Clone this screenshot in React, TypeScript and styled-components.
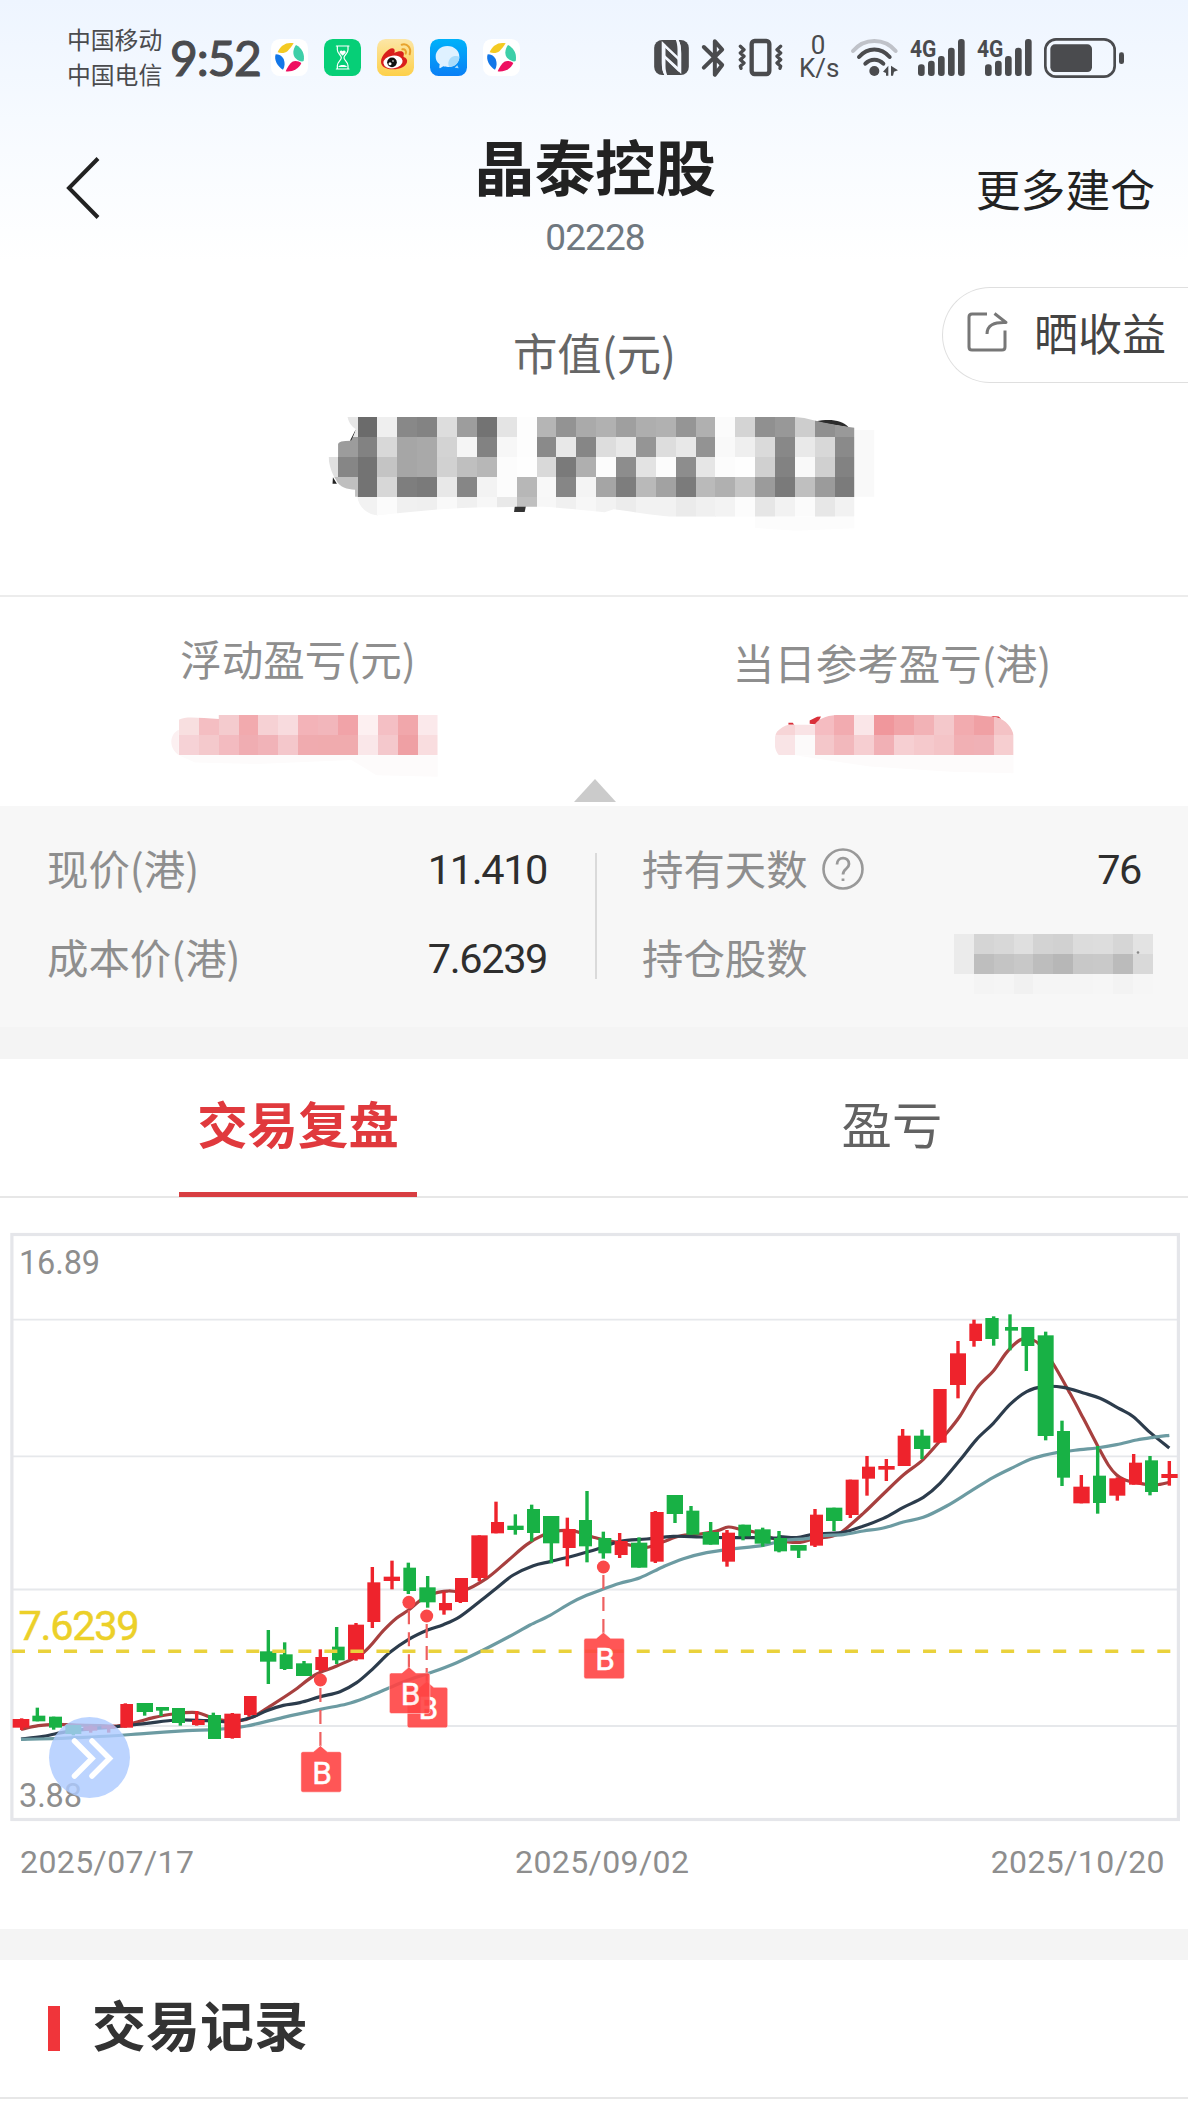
import React from "react";
import styled, { createGlobalStyle, css } from "styled-components";

const CJK = `"Noto Sans CJK SC", "Noto Sans", sans-serif`;
const NUM = `Roboto, "Noto Sans CJK SC", sans-serif`;

const GlobalStyle = createGlobalStyle`
  * { box-sizing: border-box; }
  body { margin: 0; background: #fff; font-family: ${CJK}; }
  svg { display: block; flex: none; overflow: visible; }
`;

const Page = styled.main`
  width: 1188px;
  height: 2127px;
  overflow: hidden;
  display: flex;
  flex-direction: column;
  background: linear-gradient(#eef5ff 0, #f6faff 120px, #fff 262px);
`;

/* ---------- status bar ---------- */

const StatusBar = styled.div`
  height: 114px;
  display: flex;
  align-items: flex-start;
  justify-content: space-between;
  padding: 22px 64px 0 67px;
  color: #4a4b4e;
`;

const StatusGroup = styled.div`
  display: flex;
  align-items: center;
  height: 71px;
`;

const Carriers = styled.div`
  font-size: 23.8px;
  line-height: 35px;
  width: 103px;
  margin-top: -3px;
  white-space: nowrap;
`;

const Clock = styled.div`
  font-family: Lato, ${NUM};
  font-weight: 400;
  -webkit-text-stroke: 1.1px #4a4b4e;
  font-size: 48px;
  line-height: 70px;
  letter-spacing: -1.2px;
  width: 101px;
  white-space: nowrap;
`;

const AppIcons = styled.div`
  display: flex;
  gap: 16px;
`;

const NetSpeed = styled.div`
  font-family: ${NUM};
  font-size: 26px;
  line-height: 22.5px;
  text-align: center;
  width: 38px;
  margin: -2px 14px 0 16px;
`;

const PinwheelIcon = () => (
  <svg width="37" height="37" viewBox="0 0 111 111">
    <rect width="111" height="111" rx="26" fill="#fff" />
    <path d="M20 40C28 18 48 8 68 13C62 22 56 30 50 36C42 43 30 44 20 40Z" fill="#f4ca22" />
    <path d="M75 18C94 28 102 46 98 66C92 70 80 64 72 56C64 46 66 30 75 18Z" fill="#3ecfa8" />
    <path d="M91 72C84 90 62 100 44 97C48 86 56 74 64 68C72 64 84 66 91 72Z" fill="#ee1060" />
    <path d="M14 46C8 62 20 84 36 92C42 84 42 70 38 60C32 50 24 46 14 46Z" fill="#1377e8" />
  </svg>
);

const HourglassIcon = () => (
  <svg width="37" height="37" viewBox="0 0 111 111">
    <rect width="111" height="111" rx="26" fill="#06cf77" />
    <g fill="none" stroke="#fff" strokeWidth="3.6" strokeLinecap="round" strokeLinejoin="round">
      <path d="M37 21H75M37 90H75M40 23V32C40 44 52 48 52 56C52 64 40 68 40 80V89M72 23V32C72 44 60 48 60 56C60 64 72 68 72 80V89" />
    </g>
    <path d="M56 50L47 41C46 33 54 33 56 37C58 33 66 33 65 41ZM43 84C46 76 66 76 69 84Z" fill="#fff" />
  </svg>
);

const WeiboIcon = () => (
  <svg width="37" height="37" viewBox="0 0 111 111">
    <defs>
      <linearGradient id="weibo" x1="0" y1="0" x2="0" y2="1">
        <stop offset="0" stopColor="#fce6a6" />
        <stop offset="1" stopColor="#fdd04a" />
      </linearGradient>
    </defs>
    <rect width="111" height="111" rx="26" fill="url(#weibo)" />
    <path d="M12 68C12 50 34 28 46 28C54 28 54 38 52 42C62 36 78 34 80 42C82 47 78 52 80 54C88 56 92 62 90 70C86 84 66 92 46 91C26 90 12 82 12 68Z" fill="#d91f1c" />
    <ellipse cx="48" cy="69" rx="29" ry="19" fill="#fff" transform="rotate(-8 48 69)" />
    <circle cx="45" cy="70" r="14.5" fill="#111" />
    <circle cx="39" cy="74" r="4.5" fill="#fff" />
    <circle cx="48" cy="66" r="2.5" fill="#fff" />
    <path d="M74 17C92 12 104 28 98 46M76 31C84 29 89 36 86 44" fill="none" stroke="#e8a32c" strokeWidth="6" strokeLinecap="round" />
  </svg>
);

const ChatIcon = () => (
  <svg width="37" height="37" viewBox="0 0 111 111">
    <defs>
      <linearGradient id="chat" x1="0" y1="0" x2="0" y2="1">
        <stop offset="0" stopColor="#00b2fa" />
        <stop offset="1" stopColor="#0a7ff5" />
      </linearGradient>
    </defs>
    <rect width="111" height="111" rx="26" fill="url(#chat)" />
    <path d="M52 21C74 21 88 36 88 53C88 72 72 84 54 84C48 84 44 83 40 82L30 88C27 88 28 84 29 76C21 70 17 62 17 53C17 35 32 21 52 21Z" fill="#dff1ff" />
    <path d="M88 54C88 72 74 84 58 84C50 72 58 54 74 51C80 50 85 51 88 54Z" fill="#a9dcfb" />
    <path d="M82 79L86 88L74 86Z" fill="#a9dcfb" />
  </svg>
);

const INK = "#4a4b4e";

const NfcIcon = () => (
  <svg width="35" height="35" viewBox="0 0 104 105">
    <rect width="104" height="105" rx="24" fill={INK} />
    <path d="M23 4L72 50V27C72 18 70 8 67 0H73C79 10 81 22 81 40V101L32 55V78C32 88 34 98 37 105H31C25 95 23 84 23 68Z" fill="#f3f7fe" />
    <path d="M27 12V70C27 84 29 94 33 103H56L77 103V98L32 55V40L71 76V58L32 22ZM38 3L71 33V27C71 18 69 8 66 1Z" fill={INK} />
    <path d="M32 30L72 66V82L32 46Z" fill={INK} />
    <path d="M23 4L34 14V78C34 88 36 98 39 105H31C25 95 23 84 23 68ZM81 101L70 91V27C70 18 68 8 65 0H73C79 10 81 22 81 40Z" fill="#f3f7fe" />
    <path d="M30 12L74 54V62L30 20ZM30 44L74 86V96L30 54Z" fill="#f3f7fe" />
  </svg>
);

const BluetoothIcon = () => (
  <svg width="23" height="38" viewBox="0 0 68 114">
    <path d="M5 24L60 78L38 107V7L60 32L5 86" fill="none" stroke={INK} strokeWidth="12" strokeLinejoin="round" strokeLinecap="round" />
  </svg>
);

const VibrateIcon = () => (
  <svg width="45" height="37" viewBox="0 0 135 111">
    <rect x="41" y="6" width="53" height="99" rx="9" fill="none" stroke={INK} strokeWidth="13" />
    <path
      d="M7 22L18 32L7 42L18 52L7 62L18 72L7 82L9 88M128 22L117 32L128 42L117 52L128 62L117 72L128 82L126 88"
      fill="none" stroke={INK} strokeWidth="10" strokeLinejoin="round" strokeLinecap="round"
    />
  </svg>
);

const WifiIcon = () => (
  <svg width="47" height="37" viewBox="0 0 141 111">
    <g fill="none" strokeWidth="12" strokeLinecap="round">
      <path d="M6 36C40 -4 100 -4 134 36" stroke="#bfc2c9" />
      <path d="M24 54C50 24 90 24 116 54" stroke={INK} />
      <path d="M43 74C58 58 82 58 97 74" stroke={INK} />
    </g>
    <circle cx="70" cy="96" r="15" fill={INK} />
    <path d="M112 80V110H105V102L96 98ZM120 80L141 94L129 98L126 110H120Z" fill={INK} />
  </svg>
);

const SignalIcon = () => (
  <svg width="55" height="37" viewBox="0 0 165 111">
    <text x="0" y="53" fontFamily="Roboto, sans-serif" fontWeight="700" fontSize="72" textLength="79" lengthAdjust="spacingAndGlyphs" fill={INK}>4G</text>
    {[76, 65, 51, 26, 0].map((top, i) => (
      <rect key={top} x={24 + i * 30} y={top} width="20" height={111 - top} rx="9" fill={INK} />
    ))}
  </svg>
);

const BatteryIcon = () => (
  <svg width="80" height="40" viewBox="0 0 240 120">
    <rect x="4" y="4" width="208" height="112" rx="32" fill="none" stroke={INK} strokeWidth="8" />
    <rect x="19" y="19" width="125" height="83" rx="14" fill={INK} />
    <rect x="225" y="43" width="15" height="35" rx="7" fill={INK} />
  </svg>
);

const Gap = styled.span<{ $w: number }>`
  width: ${(p) => p.$w}px;
  flex: none;
`;

/* ---------- header ---------- */

const Header = styled.header`
  height: 148px;
  display: grid;
  grid-template-columns: 1fr auto 1fr;
`;

const BackButton = styled.button`
  border: 0;
  background: none;
  padding: 0;
  margin-left: 66px;
  align-self: center;
  justify-self: start;
`;

const TitleBlock = styled.div`
  display: flex;
  flex-direction: column;
  align-items: center;
  padding: 21px 0 0 2px;
`;

const Title = styled.h1`
  margin: 0 0 23px;
  font-size: 60.5px;
  line-height: 60px;
  font-weight: 700;
  color: #222;
`;

const StockCode = styled.div`
  font: 400 37px/40px ${NUM};
  letter-spacing: -0.9px;
  color: #6f7880;
`;

const HeaderLink = styled.div`
  align-self: center;
  justify-self: end;
  margin: -1px 33px 0 0;
  font-size: 44.8px;
  line-height: 60px;
  color: #222;
`;

/* ---------- market value ---------- */

const Hero = styled.section`
  height: 335px;
  display: flex;
  flex-direction: column;
  border-bottom: 2px solid #ececec;
`;

const HeroTop = styled.div`
  height: 128px;
  display: grid;
  grid-template-columns: 1fr auto 1fr;
`;

const HeroLabel = styled.div`
  grid-column: 2;
  padding: 60px 0 0 1px;
  font-size: 44.4px;
  line-height: 60px;
  color: #666;
`;

const SharePill = styled.button`
  grid-column: 3;
  justify-self: end;
  margin: 25px 0 0;
  width: 246px;
  height: 96px;
  padding: 0 0 7px 24px;
  display: flex;
  align-items: center;
  gap: 27px;
  border: 1.5px solid #dfdfdf;
  border-right: 0;
  border-radius: 48px 0 0 48px;
  background: #fff;
  font: 400 44px/60px ${CJK};
  color: #444;
  white-space: nowrap;
`;

const HeroMosaic = styled.div`
  padding-left: 310px;
`;

type MosaicProps = {
  x: number; y: number; w: number; h: number; rows: string[][];
};

const Cells = ({ x, y, w, h, rows }: MosaicProps) => (
  <g shapeRendering="crispEdges">
    {rows.map((row, r) =>
      row.map((c, i) => (
        <rect key={`${r}-${i}`} x={x + i * w} y={y + r * h} width={w + 0.3} height={h + 0.3} fill={c} />
      ))
    )}
  </g>
);

const grey = (s: string) => s.split(" ").map((v) => `#${v}${v}${v}`);
const hex = (s: string) => s.split(" ").map((v) => `#${v}`);

const valueRows = [
  grey("e6 e6 6b ef 88 83 dd 9d 73 e4 fd b5 93 aa b1 9f ae b1 95 b0 fb d4 90 98 cd 90 99"),
  grey("e6 9c 82 d8 a6 a9 d3 f5 82 f7 fd 8a e8 86 dd e8 95 dd e8 93 f9 ef da 88 e9 d8 8a"),
  grey("e0 86 73 c4 a6 a9 d1 bf b7 fc fe d9 7a af fc 8d e3 fc 8d e6 fc fe d0 82 f9 d0 82"),
  grey("bf bf 73 d7 7e 7a e8 86 f3 fc b7 f8 86 f4 a5 7d b9 a2 7b ba b0 c5 9b 7a bf 9b 7b"),
  grey("f2 f2 f2 fb f0 ef f9 f0 f7 e9 bf f7 f0 f7 f2 ec f2 f2 eb f0 f3 fc e6 f2 fb e7 f2"),
];

const ValueMosaic = () => (
  <svg width="620" height="150" viewBox="0 0 1568 450" preserveAspectRatio="none">
    <clipPath id="valueClip">
      <path d="M95 81C98 100 108 112 117 118L104 152Q71 152 71 162V201H47C48 225 55 250 66 270C74 292 95 298 114 299V320H120C122 350 145 374 170 376C190 376 205 371 221 370C300 360 400 350 473 352L523 350H590C640 353 700 362 745 367L768 358C820 366 870 376 910 380H1377V113C1340 108 1290 96 1250 84L1227 81Z" />
    </clipPath>
    <path d="M1377 120H1427V320H1377Z" fill="#f9f9f9" />
    <path d="M1126 381H1377V415L1230 422L1126 414Z" fill="#fcfcfc" />
    <path d="M116 118L101 152H108ZM58 262L68 281H57Z" fill="#222" />
    <path d="M518 348H546L543 366H516Z" fill="#333" />
    <path d="M1280 94C1310 86 1346 88 1362 112L1300 100Z" fill="#2b2b2b" />
    <g clipPath="url(#valueClip)">
      <Cells x={19.8} y={81} w={50.28} h={60} rows={valueRows} />
    </g>
  </svg>
);

/* ---------- profit and loss ---------- */

const PnlRow = styled.section`
  height: 182px;
  display: grid;
  grid-template-columns: 594px 594px;
  background: #fff;
`;

const PnlCell = styled.div<{ $top: number; $gap: number }>`
  display: flex;
  flex-direction: column;
  align-items: center;
  padding-top: ${(p) => p.$top}px;
  gap: ${(p) => p.$gap}px;
  font-size: 41.5px;
  line-height: 60px;
  color: #8e8e8e;
`;

const PnlLabel = styled.div`
  margin-left: 2px;
`;

const PointerRow = styled.div`
  height: 27px;
  padding-left: 574px;
  background: #fff;
`;

const FloatMosaic = () => (
  <svg width="354" height="77" viewBox="0 250 566 230" preserveAspectRatio="none">
    <clipPath id="floatClip">
      <path d="M94 300C106 288 130 296 158 298V286H508V406H94Z" />
    </clipPath>
    <path d="M94 330C78 345 78 385 94 406Z" fill="#fcf0f1" />
    <path d="M94 406H508V470L410 466L370 420L220 432L120 428Z" fill="#fdfbfb" />
    <g clipPath="url(#floatClip)">
      <Cells x={94} y={286} w={31.85} h={60} rows={[
        hex("f8dfe0 f4bec2 f4cbce f2aaae f6d1d4 f8dbde f3b3b8 f2b6bb f1a3a8 fdf0f1 f4bfc4 f1a7ab fbe9eb"),
        hex("f6d2d6 f4c9cc f3bbc0 f0adb2 f1b3b8 f4c7cb f0abaf f0abae f0abae fae7e9 f4c8cc efa0a4 f9dddf"),
      ]} />
    </g>
  </svg>
);

const DayMosaic = () => (
  <svg width="354" height="77" viewBox="951 250 566 230" preserveAspectRatio="none">
    <clipPath id="dayClip">
      <path d="M1070 315H1112C1116 300 1130 288 1146 286H1360C1375 287 1390 290 1402 292C1418 300 1428 325 1430 346V406H1055C1046 390 1046 350 1052 335Q1060 320 1070 315Z" />
    </clipPath>
    <path d="M1104 312V302L1116 291L1122 290L1116 314ZM1070 309H1077L1079 315H1070ZM1394 289L1406 290L1410 297L1400 295Z" fill="#d9303a" />
    <path d="M1080 406H1430V460L1330 455L1200 440Z" fill="#fdfbfb" />
    <g clipPath="url(#dayClip)">
      <Cells x={1048} y={286} w={31.85} h={60} rows={[
        hex("f7d5d7 f9e3e5 f5bcc1 f2abb0 fae6e8 f0979c f1a4a8 f2b2b6 f4c8cb f2abaf f0a0a4 f4c2c5"),
        hex("f9e4e6 fcfafa f4c7ca f2b8bc f6ced1 f1b0b5 f6cfd2 f5c9cc f4c4c7 f1b0b4 f0b1b6 f6ced0"),
      ]} />
    </g>
  </svg>
);

/* ---------- position figures ---------- */

const Figures = styled.section`
  height: 221px;
  display: grid;
  grid-template-columns: 595px 2px 591px;
  background: #f7f7f7;
`;

const FigureColumn = styled.div<{ $left: number; $right: number }>`
  padding: 18px ${(p) => p.$right}px 0 ${(p) => p.$left}px;
`;

const FigureRule = styled.div`
  height: 126px;
  margin-top: 47px;
  background: #dadada;
`;

const FigureRow = styled.div`
  height: 89px;
  display: flex;
  align-items: center;
  justify-content: space-between;
  color: #8e8e8e;
  font-size: 41.4px;
  line-height: 60px;
`;

const FigureLabel = styled.div`
  display: flex;
  align-items: center;
  gap: 14px;
  margin-top: -4px;
`;

const FigureValue = styled.div`
  font-family: ${NUM};
  font-size: 41.5px;
  letter-spacing: -1.4px;
  margin-top: 3px;
  color: #2e2e2e;
`;

const SharesMosaic = styled.svg`
  margin: -1px -12px 0 0;
`;

const Band = styled.div<{ $h: number }>`
  height: ${(p) => p.$h}px;
  background: #f4f4f4;
`;

/* ---------- tabs ---------- */

const Tabs = styled.nav`
  height: 139px;
  display: grid;
  grid-template-columns: 1fr 1fr;
  background: #fff;
  border-bottom: 2px solid #e7e7e7;
`;

const Tab = styled.div<{ $active?: boolean }>`
  justify-self: center;
  margin-left: 2px;
  width: 238px;
  height: 138px;
  padding-top: 34px;
  text-align: center;
  font-size: 50.4px;
  line-height: 60px;
  color: #626262;
  ${(p) =>
    p.$active &&
    css`
      font-weight: 700;
      color: #e0393d;
      border-bottom: 5px solid #d83e42;
    `}
`;

/* ---------- chart ---------- */

const ChartSection = styled.section`
  height: 731px;
  background: #fff;
  position: relative;
`;

const FastForward = styled.button`
  position: absolute;
  left: 49px;
  top: 519px;
  width: 81px;
  height: 81px;
  padding: 0;
  border: 0;
  border-radius: 50%;
  background: rgba(173, 202, 255, 0.82);
`;

const DateAxis = styled.div`
  display: grid;
  grid-template-columns: 495px 1fr auto;
  padding: 0 23px 0 20px;
  height: 60px;
  font: 400 32px/60px ${NUM};
  letter-spacing: 0.4px;
  color: #8e8e8e;
`;

const DateLabel = styled.span`
  white-space: nowrap;
`;

const UP = "#ee232c";
const DOWN = "#18b145";

/* Each candle: direction, body left, body right, body top, body bottom, high, low, wick x */
type Candle = [number, number, number, number, number, number, number, number];
type Series = { ox: number; oy: number; candles: Candle[] };

const series: Series[] = [
  { ox: 0, oy: 1460, candles: [
    [1, 38, 88, 777, 803, 775, 810, 65], [0, 97, 136, 767, 784, 743, 784, 112],
    [0, 147, 186, 770, 803, 770, 809, 161], [0, 196, 244, 795, 822, 795, 826, 220],
    [1, 250, 292, 799, 812, 796, 818, 272], [1, 304, 346, 797, 806, 795, 818, 326],
    [1, 361, 399, 732, 803, 730, 803, 376], [0, 410, 459, 729, 756, 729, 767, 434],
    [0, 468, 507, 741, 752, 741, 768, 483], [0, 516, 555, 744, 789, 744, 797, 541],
    [1, 576, 614, 780, 795, 753, 797, 590], [0, 624, 663, 765, 837, 758, 837, 640],
    [1, 673, 722, 761, 834, 759, 836, 697], [1, 732, 770, 708, 765, 708, 770, 747],
    [0, 780, 829, 574, 605, 510, 672, 805], [0, 839, 878, 583, 627, 547, 630, 854],
    [0, 888, 936, 610, 648, 603, 648, 912], [1, 946, 984, 591, 630, 568, 634, 961],
    [0, 996, 1034, 560, 601, 501, 612, 1010], [1, 1044, 1092, 494, 598, 489, 602, 1068],
    [1, 1102, 1141, 367, 486, 321, 504, 1117], [1, 1151, 1200, 350, 363, 302, 388, 1176],
    [0, 1210, 1248, 323, 393, 308, 402, 1225],
  ] },
  { ox: 380, oy: 1440, candles: [
    [0, 118, 167, 442, 487, 408, 503, 143], [1, 177, 216, 489, 511, 455, 524, 192],
    [1, 225, 264, 414, 486, 414, 489, 241], [1, 274, 323, 286, 414, 286, 424, 298],
    [1, 333, 372, 246, 280, 185, 280, 348], [0, 382, 431, 257, 270, 223, 284, 406],
    [0, 441, 480, 207, 279, 194, 305, 455], [0, 489, 538, 228, 310, 228, 370, 514],
    [1, 548, 587, 267, 324, 233, 379, 562], [0, 597, 636, 240, 319, 153, 367, 621],
    [0, 655, 694, 294, 340, 275, 356, 670], [1, 704, 743, 303, 345, 279, 354, 719],
    [0, 753, 802, 308, 383, 292, 383, 777], [1, 811, 851, 216, 365, 213, 369, 826],
    [0, 860, 909, 165, 222, 165, 249, 885], [0, 919, 958, 212, 284, 198, 284, 933],
    [0, 968, 1017, 276, 314, 246, 314, 992], [1, 1026, 1065, 278, 365, 270, 380, 1041],
    [0, 1075, 1113, 254, 289, 254, 301, 1089], [0, 1124, 1172, 268, 311, 263, 320, 1148],
    [0, 1182, 1221, 294, 334, 273, 337, 1197], [0, 1231, 1280, 315, 332, 315, 354, 1256],
  ] },
  { ox: 780, oy: 1220, candles: [
    [1, 90, 129, 884, 977, 867, 981, 105], [0, 138, 187, 863, 903, 863, 933, 162],
    [1, 197, 236, 779, 885, 779, 894, 211], [1, 246, 285, 740, 776, 708, 827, 261],
    [1, 295, 344, 738, 749, 717, 783, 319], [1, 353, 392, 647, 738, 627, 738, 368],
    [0, 402, 451, 647, 687, 629, 717, 426], [1, 460, 500, 507, 668, 507, 668, 480],
    [1, 510, 558, 400, 495, 363, 535, 534], [1, 568, 606, 311, 363, 299, 380, 582],
    [0, 616, 656, 294, 357, 289, 377, 641], [0, 675, 714, 321, 332, 283, 391, 690],
    [0, 724, 763, 321, 378, 321, 453, 739], [0, 773, 821, 346, 648, 335, 661, 797],
    [0, 831, 870, 633, 773, 602, 798, 846], [1, 880, 929, 800, 850, 765, 850, 904],
    [0, 939, 978, 767, 849, 678, 881, 953], [1, 988, 1036, 775, 827, 772, 842, 1012],
    [1, 1047, 1086, 728, 794, 702, 794, 1061], [0, 1095, 1134, 721, 816, 708, 826, 1110],
    [1, 1144, 1193, 762, 774, 723, 797, 1168],
  ] },
];

type Pt = [number, number];
const at = (ox: number, oy: number, flat: number[]): Pt[] => {
  const out: Pt[] = [];
  for (let i = 0; i < flat.length; i += 2) out.push([ox + flat[i] / 3, oy + flat[i + 1] / 3]);
  return out;
};

const smooth = (p: Pt[]) => {
  let d = `M${p[0][0]} ${p[0][1]}`;
  for (let i = 0; i < p.length - 1; i++) {
    const a = p[Math.max(0, i - 1)], b = p[i], c = p[i + 1], e = p[Math.min(p.length - 1, i + 2)];
    d += `C${b[0] + (c[0] - a[0]) / 6} ${b[1] + (c[1] - a[1]) / 6} ${c[0] - (e[0] - b[0]) / 6} ${c[1] - (e[1] - b[1]) / 6} ${c[0]} ${c[1]}`;
  }
  return d;
};

const shortAverage = smooth([
  ...at(0, 1460, [63, 808, 115, 797, 165, 793, 230, 795, 300, 797, 350, 798, 400, 789, 460, 773, 520, 762, 590, 758, 650, 778, 720, 782, 760, 770, 805, 742, 880, 693, 945, 645, 1010, 618, 1090, 578, 1150, 512, 1190, 474]),
  ...at(380, 1440, [86, 510, 125, 478, 167, 459, 205, 453, 250, 452, 320, 415, 380, 365, 440, 314, 490, 285, 540, 272, 590, 275, 640, 292, 690, 303, 740, 313, 800, 322, 850, 305, 900, 288, 960, 282, 1010, 273, 1045, 261, 1080, 268, 1140, 280, 1190, 300]),
  ...at(780, 1220, [10, 964, 60, 967, 105, 955, 150, 950, 185, 936, 250, 880, 310, 822, 370, 765, 430, 718, 495, 645, 540, 588, 590, 505, 640, 453, 680, 397, 720, 360, 750, 357, 780, 375, 820, 432, 870, 520, 910, 595, 950, 672, 985, 735, 1010, 765, 1035, 780, 1070, 788, 1110, 795, 1140, 793, 1168, 787]),
]);
const midAverage = smooth([
  ...at(0, 1460, [63, 837, 130, 829, 200, 815, 270, 807, 350, 800, 440, 790, 530, 780, 620, 782, 700, 785, 760, 770, 800, 752, 850, 736, 900, 728, 961, 710, 1020, 695, 1070, 668, 1120, 625, 1170, 577]),
  ...at(380, 1440, [86, 598, 143, 570, 190, 554, 240, 530, 300, 484, 350, 444, 400, 405, 460, 377, 514, 364, 590, 345, 650, 328, 720, 304, 800, 297, 880, 289, 960, 291, 1040, 293, 1120, 293, 1190, 294]),
  ...at(780, 1220, [0, 950, 50, 953, 100, 943, 150, 940, 190, 937, 240, 922, 310, 895, 370, 862, 430, 832, 480, 790, 540, 720, 590, 658, 640, 610, 690, 553, 740, 515, 790, 500, 850, 502, 910, 519, 960, 535, 1020, 567, 1060, 590, 1110, 637, 1168, 684]),
]);
const longAverage = smooth([
  ...at(0, 1460, [63, 838, 160, 836, 230, 833, 330, 828, 440, 820, 560, 812, 650, 808, 740, 798, 850, 772, 961, 748, 1040, 732, 1100, 712, 1158, 688]),
  ...at(380, 1440, [60, 730, 100, 715, 155, 697, 230, 668, 310, 630, 400, 583, 450, 555, 510, 526, 570, 490, 620, 466, 670, 447, 720, 430, 780, 413, 850, 380, 910, 356, 980, 338, 1041, 329, 1150, 316, 1190, 306]),
  ...at(780, 1220, [20, 960, 80, 956, 130, 947, 190, 944, 250, 933, 310, 924, 370, 906, 430, 892, 500, 858, 570, 815, 640, 772, 700, 742, 760, 715, 830, 698, 900, 689, 950, 684, 1010, 674, 1070, 660, 1120, 652, 1168, 646]),
]);

const BuyMark = ({ x, dot, box }: { x: number; dot: number; box: number }) => (
  <g>
    <line x1={x} x2={x} y1={dot + 8} y2={box - 4} stroke="#ee6060" strokeWidth="2.2" strokeDasharray="14 8" />
    <circle cx={x} cy={dot} r="6.5" fill="#fa4848" />
    <g opacity="0.9">
      <path
        d={`M${x - 17.5} ${box}H${x - 7}L${x} ${box - 6}L${x + 7} ${box}H${x + 19}q2 0 2 2v36.500q0 2 -2 2H${x - 17.5}q-2 0 -2 -2v-36.500q0 -2 2 -2Z`}
        fill="#ff4444" stroke="#fff" strokeOpacity="0.5" strokeWidth="1"
      />
      <text x={x + 1.6} y={box + 32} textAnchor="middle" fontFamily="Roboto, sans-serif" fontSize="31.500" fontWeight="400" fill="#fff" stroke="#fff" strokeWidth="0.500">B</text>
    </g>
  </g>
);

const CandleChart = () => (
  <svg width="1188" height="634" viewBox="0 1198 1188 634">
    <g stroke="#e6e8eb" strokeWidth="1.8">
      {[1319.7, 1456.3, 1589.5, 1726].map((y) => (
        <line key={y} x1="12" x2="1178" y1={y} y2={y} />
      ))}
    </g>
    <rect x="11.9" y="1234.500" width="1166.500" height="585" fill="none" stroke="#e5e6ea" strokeWidth="3.200" />
    <g fill="none" strokeWidth="3.200">
      <path d={shortAverage} stroke="#a7403f" />
      <path d={midAverage} stroke="#2c3c4c" />
      <path d={longAverage} stroke="#6c9ba2" />
    </g>
    {series.map(({ ox, oy, candles }) =>
      candles.map(([up, l, r, t, b, hi, lo, wx]) => (
        <g key={`${ox}-${l}`} fill={up ? UP : DOWN}>
          <rect x={ox + wx / 3 - 1.7} y={oy + hi / 3} width="3.4" height={(lo - hi) / 3} />
          <rect x={ox + l / 3} y={oy + t / 3} width={(r - l) / 3} height={(b - t) / 3} />
        </g>
      ))
    )}
    <line x1="12" x2="1177" y1="1651.300" y2="1651.300" stroke="#ead23c" strokeWidth="3.600" strokeDasharray="13 13.030" />
    <BuyMark x={426.7} dot={1616} box={1687.3} />
    <BuyMark x={408.9} dot={1602.3} box={1673} />
    <BuyMark x={320.4} dot={1680} box={1751.7} />
    <BuyMark x={603.4} dot={1567} box={1638.3} />
    <g fontFamily="Roboto, sans-serif" fill="#8e8e8e" fontSize="32.500">
      <text x="19" y="1274" textLength="81">16.89</text>
      <text x="19" y="1807" textLength="63">3.88</text>
      <text x="18.500" y="1639.500" textLength="121" fontSize="41.500" fill="#ecd029" stroke="#ecd029" strokeWidth="0.500">7.6239</text>
    </g>
  </svg>
);

/* ---------- records ---------- */

const Records = styled.section`
  height: 139px;
  display: flex;
  align-items: center;
  gap: 32px;
  padding-left: 48px;
  background: #fff;
  border-bottom: 2px solid #e7e7e7;
`;

const RecordsMark = styled.span`
  width: 12px;
  height: 45px;
  background: #f0353a;
`;

const RecordsTitle = styled.h2`
  margin: -10px 0 0;
  font-size: 54px;
  line-height: 70px;
  font-weight: 700;
  color: #333;
`;

const Rest = styled.div`
  flex: 1;
  background: #fff;
`;

export default function App() {
  return (
    <>
      <GlobalStyle />
      <Page>
        <StatusBar>
          <StatusGroup>
            <Carriers>
              <div>中国移动</div>
              <div>中国电信</div>
            </Carriers>
            <Clock>9:52</Clock>
            <AppIcons>
              <PinwheelIcon />
              <HourglassIcon />
              <WeiboIcon />
              <ChatIcon />
              <PinwheelIcon />
            </AppIcons>
          </StatusGroup>
          <StatusGroup>
            <NfcIcon />
            <Gap $w={13} />
            <BluetoothIcon />
            <Gap $w={13} />
            <VibrateIcon />
            <NetSpeed>
              <div>0</div>
              <div>K/s</div>
            </NetSpeed>
            <WifiIcon />
            <Gap $w={12} />
            <SignalIcon />
            <Gap $w={12} />
            <SignalIcon />
            <Gap $w={12} />
            <BatteryIcon />
          </StatusGroup>
        </StatusBar>

        <Header>
          <BackButton aria-label="返回">
            <svg width="34" height="62" viewBox="0 0 34 62">
              <path d="M32 1.500L3 31L32 60.500" fill="none" stroke="#222" strokeWidth="4" />
            </svg>
          </BackButton>
          <TitleBlock>
            <Title>晶泰控股</Title>
            <StockCode>02228</StockCode>
          </TitleBlock>
          <HeaderLink>更多建仓</HeaderLink>
        </Header>

        <Hero>
          <HeroTop>
            <HeroLabel>市值(元)</HeroLabel>
            <SharePill>
              <svg width="40" height="40" viewBox="0 0 40 40">
                <g fill="none" stroke="#777" strokeWidth="3" strokeLinejoin="round">
                  <path d="M20 2H5Q2 2 2 5V35Q2 38 5 38H35Q38 38 38 35V18.500" />
                  <path d="M20 22C20 13 27 10 39 10.500L27.500 1.500" />
                </g>
              </svg>
              晒收益
            </SharePill>
          </HeroTop>
          <HeroMosaic>
            <ValueMosaic />
          </HeroMosaic>
        </Hero>

        <PnlRow>
          <PnlCell $top={31} $gap={15}>
            <PnlLabel>浮动盈亏(元)</PnlLabel>
            <FloatMosaic />
          </PnlCell>
          <PnlCell $top={35} $gap={11}>
            <PnlLabel>当日参考盈亏(港)</PnlLabel>
            <DayMosaic />
          </PnlCell>
        </PnlRow>
        <PointerRow>
          <svg width="42" height="23" viewBox="0 0 42 23">
            <path d="M21 0L42 23H0Z" fill="#cbcbcb" />
          </svg>
        </PointerRow>

        <Figures>
          <FigureColumn $left={47} $right={48}>
            <FigureRow>
              <FigureLabel>现价(港)</FigureLabel>
              <FigureValue>11.410</FigureValue>
            </FigureRow>
            <FigureRow>
              <FigureLabel>成本价(港)</FigureLabel>
              <FigureValue>7.6239</FigureValue>
            </FigureRow>
          </FigureColumn>
          <FigureRule />
          <FigureColumn $left={45} $right={47}>
            <FigureRow>
              <FigureLabel>
                持有天数
                <svg width="44" height="44" viewBox="0 0 44 44">
                  <circle cx="21" cy="24" r="19.500" fill="none" stroke="#999" strokeWidth="2.600" />
                  <path d="M15 19.500C15 11 27 11 27 19C27 24 21 23.500 21 29.500M21 33.500V36" fill="none" stroke="#999" strokeWidth="2.800" />
                </svg>
              </FigureLabel>
              <FigureValue>76</FigureValue>
            </FigureRow>
            <FigureRow>
              <FigureLabel>持仓股数</FigureLabel>
              <SharesMosaic width="199" height="46" viewBox="0 0 199 46">
                <Cells x={0} y={0} w={19.87} h={20} rows={[
                  grey("eb d5 d8 df d3 d1 dc dd d6 e3"),
                  grey("eb be c4 c8 bd b7 c8 c9 bb d9"),
                  grey("f7 f4 f5 f1 f5 f5 f5 f6 f3 f6"),
                ]} />
                <circle cx="184" cy="18.500" r="1.300" fill="#888" />
              </SharesMosaic>
            </FigureRow>
          </FigureColumn>
        </Figures>
        <Band $h={32} />

        <Tabs>
          <Tab $active>交易复盘</Tab>
          <Tab>盈亏</Tab>
        </Tabs>

        <ChartSection>
          <CandleChart />
          <DateAxis>
            <DateLabel>2025/07/17</DateLabel>
            <DateLabel>2025/09/02</DateLabel>
            <DateLabel>2025/10/20</DateLabel>
          </DateAxis>
          <FastForward aria-label="展开">
            <svg width="81" height="81" viewBox="0 0 81 81">
              <path d="M25.500 24L43 41.500L25.500 59M43 24L60.500 41.500L43 59" fill="none" stroke="#fff" strokeWidth="5.500" strokeLinecap="round" />
            </svg>
          </FastForward>
        </ChartSection>
        <Band $h={31} />

        <Records>
          <RecordsMark />
          <RecordsTitle>交易记录</RecordsTitle>
        </Records>
        <Rest />
      </Page>
    </>
  );
}
